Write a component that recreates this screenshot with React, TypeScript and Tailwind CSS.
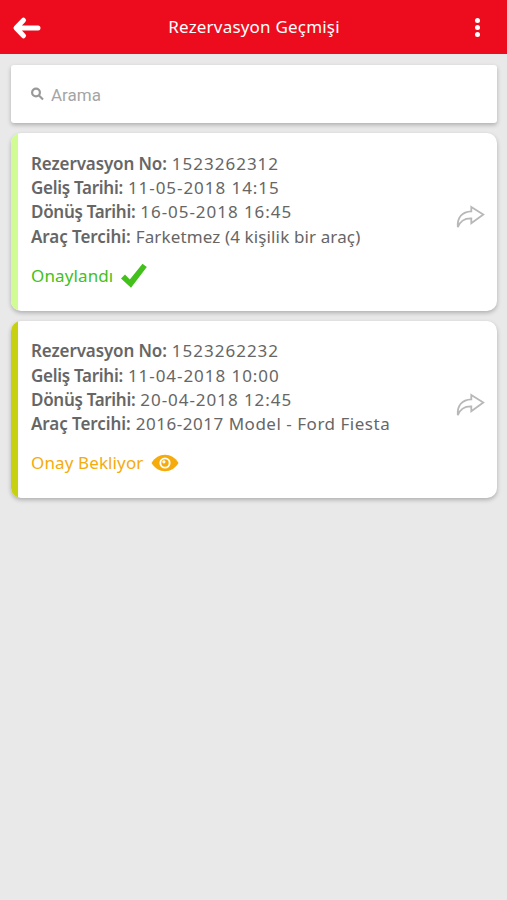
import { useState } from "react";

type Reservation = {
  no: string;
  arrival: string;
  departure: string;
  vehicle: string;
  vehicleTracking: string;
  approved: boolean;
};

const reservations: Reservation[] = [
  {
    no: "1523262312",
    arrival: "11-05-2018 14:15",
    departure: "16-05-2018 16:45",
    vehicle: "Farketmez (4 kişilik bir araç)",
    vehicleTracking: "tracking-[0.13px]",
    approved: true,
  },
  {
    no: "1523262232",
    arrival: "11-04-2018 10:00",
    departure: "20-04-2018 12:45",
    vehicle: "2016-2017 Model - Ford Fiesta",
    vehicleTracking: "tracking-[0.52px]",
    approved: false,
  },
];

function BackIcon() {
  return (
    <svg width="30" height="24" viewBox="0 0 30 24" fill="none" stroke="#fff" strokeWidth="5" strokeLinecap="round" strokeLinejoin="round">
      <path d="M11.5 4.2 4 12l7.5 7.8M5 12h21" />
    </svg>
  );
}

function ShareIcon() {
  return (
    <svg width="30" height="24" viewBox="0 0 30 24" fill="none" stroke="#b8b8b8" strokeWidth="1.8">
      <path d="M15.3 2 27.3 9.6 15.3 18.2v-4.8C8.5 13.2 4 16.2 1.8 22.3 1 12.5 6 6.7 15.3 6.3Z" />
    </svg>
  );
}

function CheckIcon() {
  return (
    <svg width="28" height="26" viewBox="0 0 28 26" fill="#43c01c">
      <path d="m0 15.4 4-3.8 4.8 4.8L21.5.8l4.3 3.2L10 24.7Z" />
    </svg>
  );
}

function EyeIcon() {
  return (
    <svg width="28" height="18" viewBox="0 0 28 18">
      <path d="M.5 9C4 3.500 8.500.8 14 .8S24 3.500 27.500 9C24 14.500 19.500 17.200 14 17.200S4 14.500.5 9Z" fill="#f5ab0c" />
      <circle cx="14" cy="9" r="5.6" fill="#fff" />
      <circle cx="14" cy="9" r="3.7" fill="#f5ab0c" />
      <circle cx="12.9" cy="7.8" r="1.6" fill="#fff" />
    </svg>
  );
}

function Row({ label, labelTracking, value, valueTracking }: { label: string; labelTracking: string; value: string; valueTracking: string }) {
  return (
    <div className="flex whitespace-nowrap">
      <span className={`font-semibold mr-[5px] ${labelTracking}`}>{label}</span>
      <span className={valueTracking}>{value}</span>
    </div>
  );
}

function ReservationCard({ item }: { item: Reservation }) {
  return (
    <div className="flex h-[177.5px] overflow-hidden rounded-[10px] bg-white shadow-[0_2px_4px_rgba(0,0,0,0.25)]">
      <div className={`w-[7px] ${item.approved ? "bg-[#d0fc93]" : "bg-[#c7d110]"}`} />
      <div className="flex-1 pl-[13px] pt-[18.6px]">
        <div className="text-[17px] leading-[24.4px] text-[#666]">
          <Row label="Rezervasyon No:" labelTracking="tracking-[-0.12px]" value={item.no} valueTracking="tracking-[1px]" />
          <Row label="Geliş Tarihi:" labelTracking="tracking-[-0.28px]" value={item.arrival} valueTracking="tracking-[0.95px]" />
          <Row label="Dönüş Tarihi:" labelTracking="tracking-[-0.3px]" value={item.departure} valueTracking="tracking-[0.95px]" />
          <Row label="Araç Tercihi:" labelTracking="tracking-[-0.06px]" value={item.vehicle} valueTracking={item.vehicleTracking} />
        </div>
        <div className={`flex items-center gap-2 mt-[12.4px] h-[28px] text-[17px] ${item.approved ? "text-[#43c01c]" : "text-[#f5ab0c]"}`}>
          <span className="tracking-[0.12px]">{item.approved ? "Onaylandı" : "Onay Bekliyor"}</span>
          {item.approved ? <CheckIcon /> : <EyeIcon />}
        </div>
      </div>
      <button className="mb-[9px] mr-[11px]" aria-label="Paylaş">
        <ShareIcon />
      </button>
    </div>
  );
}

export default function App() {
  const [query, setQuery] = useState("");
  const visible = reservations.filter((r) => r.no.includes(query));

  return (
    <div className="min-h-screen bg-[#e9e9e9] font-['Noto_Sans',sans-serif]">
      {/* Header */}
      <header className="flex h-[54px] items-center justify-between bg-[#ec0c1e] pl-3 pr-[27px] text-white">
        <button className="pt-px" aria-label="Geri">
          <BackIcon />
        </button>
        <h1 className="mr-[9px] text-[17px] tracking-[0.2px]">Rezervasyon Geçmişi</h1>
        <button className="flex flex-col gap-[2px] pt-px" aria-label="Menü">
          <span className="size-[5px] rounded-full bg-white" />
          <span className="size-[5px] rounded-full bg-white" />
          <span className="size-[5px] rounded-full bg-white" />
        </button>
      </header>

      <main className="flex flex-col gap-[10px] pt-[11px] pl-[11px] pr-[10px]">
        {/* Search */}
        <label className="flex h-[58px] items-center gap-[7px] rounded-[3px] bg-white pl-[19px] shadow-[0_2px_4px_rgba(0,0,0,0.25)]">
          <svg width="14" height="14" viewBox="0 0 14 14" fill="none" stroke="#999" strokeWidth="2.2">
            <circle cx="6" cy="5.5" r="3.9" />
            <path d="m9 8.5 4 4" />
          </svg>
          <input
            value={query}
            onChange={(e) => setQuery(e.target.value)}
            placeholder="Arama"
            className="flex-1 bg-transparent pt-[3px] font-[Roboto,sans-serif] text-[17px] text-[#666] outline-none placeholder:text-[#a5a5a5]"
          />
        </label>

        {visible.map((item) => (
          <ReservationCard key={item.no} item={item} />
        ))}
      </main>
    </div>
  );
}
